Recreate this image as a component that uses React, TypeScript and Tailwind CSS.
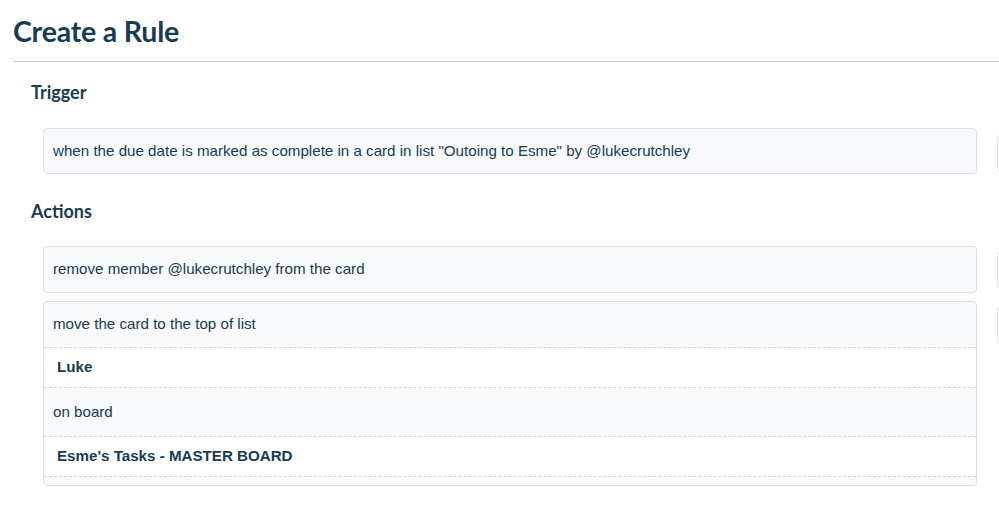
import React from "react";

const textFont = { fontFamily: '"Liberation Sans", Arial, Helvetica, sans-serif' };

function SideStub({ h }: { h: string }) {
  return <div className={`w-[6px] ${h} shrink-0 rounded-l-[4px] border border-r-0 border-[#e3e5ea] bg-[#f8f9fb]`} />;
}

export default function App() {
  return (
    <div className="w-[999px] h-[507px] overflow-hidden bg-white text-[#173b51]">
      <div className="pl-[13px] pt-[13px]">
        <h1 className="text-[28.5px] leading-[36px] font-bold font-['Lato',sans-serif] tracking-[-0.2px]">Create a Rule</h1>
        <div className="mt-[12px] h-px bg-[#cfd1d4]" />
      </div>
      <div className="pl-[31px]">
        <h2 className="mt-[18px] text-[18px] leading-[24px] font-bold font-['Lato',sans-serif]">Trigger</h2>
        <div className="mt-[24px] flex items-start gap-[20px]">
          <div className="w-[934px] shrink-0 ml-[12px] h-[46px] flex items-center px-[9px] rounded-[4px] border border-[#dcdfe4] bg-[#f8f9fb] text-[15.15px]" style={textFont}>
            when the due date is marked as complete in a card in list "Outoing to Esme" by @lukecrutchley
          </div>
          <div className="mt-[7px]"><SideStub h="h-[37px]" /></div>
        </div>
        <h2 className="mt-[25px] text-[18px] leading-[24px] font-bold font-['Lato',sans-serif]">Actions</h2>
        <div className="mt-[23px] flex items-start gap-[20px]">
          <div className="w-[934px] shrink-0 ml-[12px] h-[47px] flex items-center px-[9px] rounded-[4px] border border-[#dcdfe4] bg-[#f8f9fb] text-[15.15px]" style={textFont}>
            remove member @lukecrutchley from the card
          </div>
          <div className="mt-[6px]"><SideStub h="h-[37px]" /></div>
        </div>
        <div className="mt-[8px] flex items-start gap-[20px]">
          <div className="w-[934px] shrink-0 ml-[12px] rounded-[4px] border border-[#dcdfe4] bg-[#f8f9fb] text-[15.15px] overflow-hidden" style={textFont}>
            <div className="h-[46px] flex items-center px-[9px] border-b border-dashed border-[#d3d5d9]">move the card to the top of list</div>
            <div className="h-[40px] flex items-center px-[13px] bg-white font-bold border-b border-dashed border-[#d3d5d9]">Luke</div>
            <div className="h-[49px] flex items-center px-[9px] border-b border-dashed border-[#d3d5d9]">on board</div>
            <div className="h-[40px] flex items-center px-[13px] bg-white font-bold border-b border-dashed border-[#d3d5d9]">Esme's Tasks - MASTER BOARD</div>
            <div className="h-[8px]" />
          </div>
          <div className="mt-[6px]"><SideStub h="h-[37px]" /></div>
        </div>
      </div>
    </div>
  );
}
